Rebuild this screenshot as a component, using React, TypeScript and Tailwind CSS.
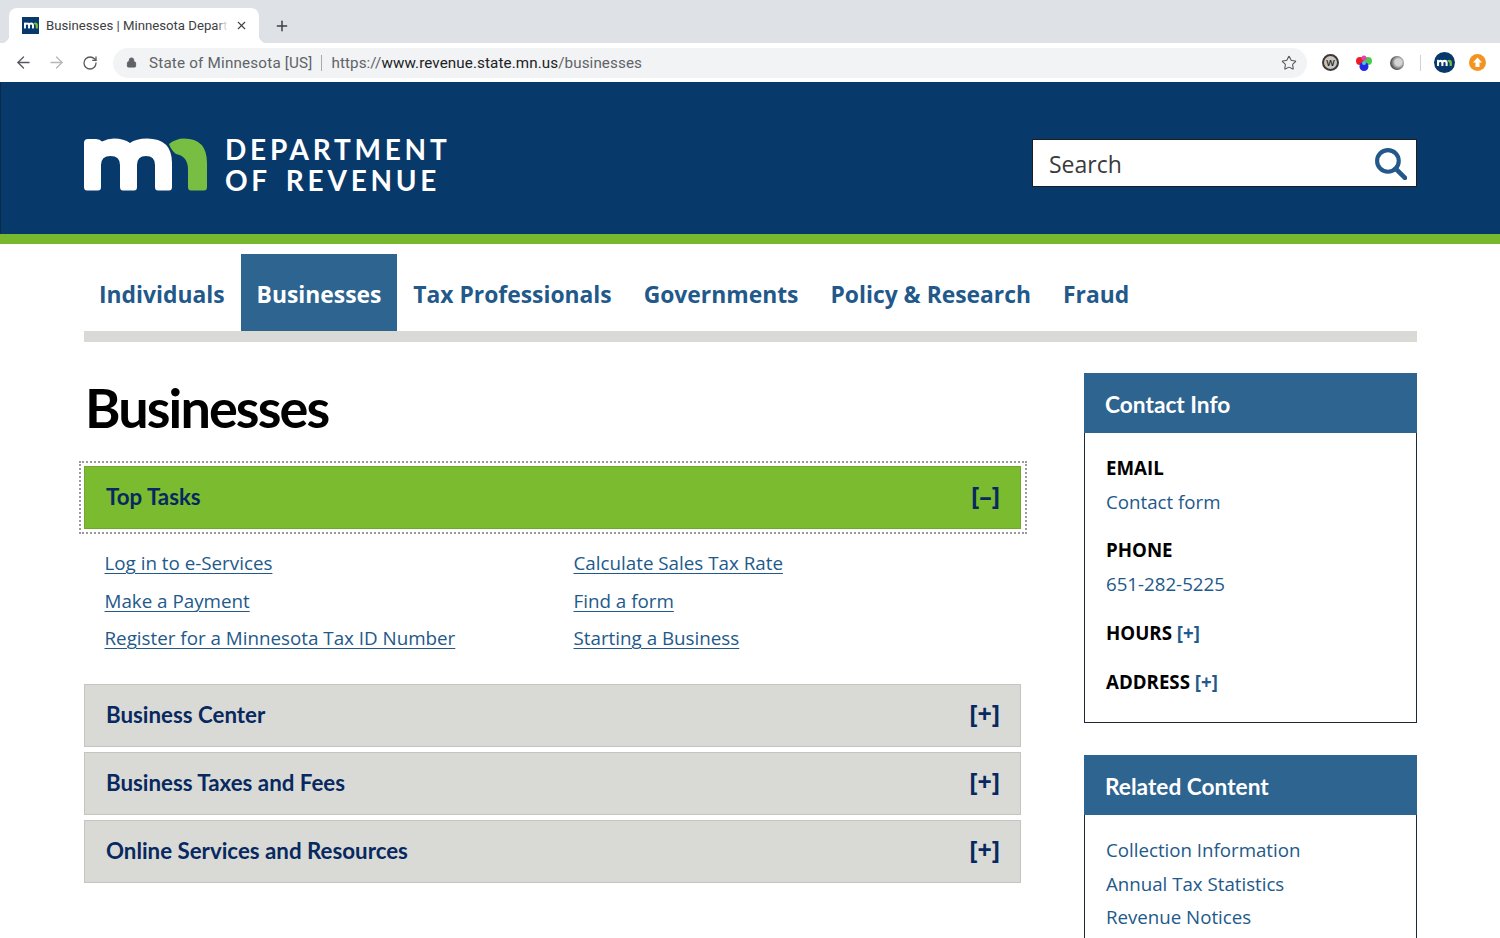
import React from "react";
import { ArrowLeft, ArrowRight, RotateCw, Lock, Star, X, Plus } from "lucide-react";

const WHITE_M = "M84 143Q84 139 88 139H96Q100 139 102 141.5Q108 138.5 114 138.5Q124 138.5 130 143Q136 138.5 147 138.5Q172 138.5 172 163V187Q172 190.5 169 190.5H158Q155 190.5 155 187V165Q155 156 146 156Q137 156 137 165V187Q137 190.5 134 190.5H123Q120 190.5 120 187V165Q120 156 110.5 156Q101 156 101 165V187Q101 190.5 98 190.5H87Q84 190.5 84 187Z";
const GREEN_N = "M169 144Q176 138.5 184 138.5Q207 138.5 207 163V187Q207 190.5 204 190.5H191Q188 190.5 188 187V170Q188 156 176 154Q171 150 169 144Z";

const Mark = ({ className }: { className: string }) => (
  <svg viewBox="84 138 124 54" className={className}>
    <path fill="#fff" d={WHITE_M} />
    <path fill="#78be43" d={GREEN_N} />
  </svg>
);

const Expand = ({ title, minus = false }: { title: string; minus?: boolean }) => (
  <div className={`flex items-center justify-between h-[63px] pl-[21px] pr-[20px] border ${minus ? "bg-[#7abb2f] border-[#6fa82b]" : "bg-[#d9dad6] border-[#c4c5bf]"}`}>
    <span className="font-['Lato',sans-serif] font-bold text-[22.3px] text-[#07295f] -mt-[2px]">{title}</span>
    <span className="font-['Open_Sans',sans-serif] font-bold text-[25px] text-[#07295f] -mt-[4px]">{minus ? "[–]" : "[+]"}</span>
  </div>
);

const TaskLink = ({ children }: { children: React.ReactNode }) => (
  <a className="text-[18.8px] leading-[26px] text-[#22598a] underline underline-offset-[3px] decoration-1">{children}</a>
);

const Side = ({ title, children }: { title: string; children: React.ReactNode }) => (
  <section className="border border-[#1a2a3a] border-t-0">
    <h2 className="h-[60px] -mx-px px-[21px] pt-[4px] flex items-center bg-[#2e6490] text-white font-['Lato',sans-serif] font-bold text-[22.7px]">{title}</h2>
    {children}
  </section>
);

export default function App() {
  return (
    <div className="w-[1500px] h-[938px] overflow-hidden bg-white font-['Open_Sans',sans-serif]">
      {/* browser tabs */}
      <div className="h-[43px] bg-[#dee1e6] flex items-end pl-[9px]">
        <div className="relative w-[250px] h-[35px] bg-white rounded-t-[8px] flex items-center pl-[13px] pr-[11px] gap-[7px]">
          <span className="absolute -left-[8px] bottom-0 w-[8px] h-[8px] bg-[radial-gradient(circle_at_0_0,#dee1e6_8px,white_8.5px)]" />
          <span className="absolute -right-[8px] bottom-0 w-[8px] h-[8px] bg-[radial-gradient(circle_at_100%_0,#dee1e6_8px,white_8.5px)]" />
          <span className="w-[17px] h-[17px] bg-[#07396a] shrink-0 flex items-center justify-center">
            <Mark className="w-[14px] h-[7px]" />
          </span>
          <span className="relative w-[183px] whitespace-nowrap overflow-hidden font-['Roboto',sans-serif] text-[13.2px] text-[#3c4043]">
            Businesses | Minnesota Depart
            <span className="absolute right-0 top-0 bottom-0 w-[12px] bg-gradient-to-l from-white to-transparent" />
          </span>
          <X size={13} strokeWidth={2} className="text-[#3c4043] shrink-0 ml-auto" />
        </div>
        <div className="h-[35px] flex items-center pl-[15px]">
          <Plus size={16} strokeWidth={2.2} className="text-[#3c4043]" />
        </div>
      </div>
      {/* browser toolbar */}
      <div className="h-[39px] bg-white flex items-center pl-[14px] pr-[11px]">
        <ArrowLeft size={19} strokeWidth={1.6} className="text-[#55585c]" />
        <ArrowRight size={19} strokeWidth={1.6} className="text-[#b4b6b9] ml-[14px]" />
        <RotateCw size={16} strokeWidth={1.9} className="text-[#55585c] ml-[16px]" />
        <div className="ml-[15px] w-[1194px] h-[30px] rounded-full bg-[#f1f3f4] flex items-center pl-[13px] pr-[10px] font-['Roboto',sans-serif] text-[15.2px]">
          <Lock size={11} fill="#5f6368" className="text-[#5f6368] mr-[12px]" />
          <span className="text-[#5f6368] pt-[1px] tracking-[0.2px]">State of Minnesota [US]</span>
          <span className="w-px h-[16px] bg-[#a8abae] mx-[9px]" />
          <span className="text-[#5f6368] pt-[1px] tracking-[0.1px]">https://</span>
          <span className="text-[#202124] pt-[1px] tracking-[0.1px]">www.revenue.state.mn.us</span>
          <span className="text-[#5f6368] pt-[1px] tracking-[0.1px]">/businesses</span>
          <Star size={16} strokeWidth={1.6} className="text-[#55585c] ml-auto" />
        </div>
        <div className="flex items-center ml-[15px]">
          <span className="w-[17px] h-[17px] rounded-full bg-[#c9c4bf] border-[2px] border-[#3b3836] flex items-center justify-center text-[9px] font-semibold text-[#222]">W</span>
          <svg viewBox="0 0 18 18" className="w-[18px] h-[18px] ml-[16px]">
            <circle cx="5" cy="7" r="4" fill="#ee1c25" />
            <circle cx="13" cy="7" r="4" fill="#4ecb4a" />
            <circle cx="9" cy="12.5" r="4.5" fill="#2626e6" />
            <circle cx="9" cy="9" r="2" fill="#45c8e0" />
            <circle cx="9" cy="4" r="2.5" fill="#e73fae" />
          </svg>
          <span className="w-[14px] h-[14px] rounded-full bg-[radial-gradient(circle_at_60%_45%,#d4d4d4_30%,#555555_65%)] ml-[17px]" />
          <span className="w-px h-[16px] bg-[#d0d2d4] ml-[16px]" />
          <span className="w-[21px] h-[21px] rounded-full bg-[#07396a] ml-[13px] flex items-center justify-center">
            <Mark className="w-[15px] h-[8px]" />
          </span>
          <svg viewBox="0 0 17 17" className="w-[17px] h-[17px] ml-[14px]">
            <circle cx="8.5" cy="8.5" r="8.5" fill="#f39422" />
            <path fill="#fff" d="M8.5 3.5 13 8.5H10.5V13H6.5V8.5H4Z" />
          </svg>
        </div>
      </div>
      {/* site header */}
      <header className="h-[152px] bg-[#07396a] border-l border-[#0a2a4a] flex items-center justify-between pl-[83px] pr-[83px]">
        <div className="flex items-center gap-[18px] mt-[14px]">
          <Mark className="w-[124px] h-[54px] shrink-0" />
          <div className="font-['Lato',sans-serif] font-bold text-white text-[28px] leading-[31px] tracking-[3.75px] [word-spacing:5px] whitespace-nowrap -ml-[1px] -mt-[1px]">
            <div>DEPARTMENT</div>
            <div>OF REVENUE</div>
          </div>
        </div>
        <div className="w-[385px] h-[48px] mt-[10px] bg-white border border-[#1d1d1d] flex items-center justify-between pl-[16px] pr-[9px]">
          <span className="text-[23px] text-[#3a3a3a] pt-[3px]">Search</span>
          <svg viewBox="0 0 32 32" className="w-[33px] h-[33px]" fill="none" stroke="#22598a">
            <circle cx="13.5" cy="13.5" r="10.5" strokeWidth="4" />
            <path d="M21 21l9 9" strokeWidth="4.5" strokeLinecap="round" />
          </svg>
        </div>
      </header>
      <div className="h-[10px] bg-[#78b82f]" />
      {/* nav */}
      <div className="ml-[84px] mr-[83px] mt-[10px]">
        <nav className="flex h-[77px] -ml-[1px] font-['Open_Sans',sans-serif] font-bold text-[22.85px] text-[#22598a]">
          {["Individuals", "Businesses", "Tax Professionals", "Governments", "Policy & Research", "Fraud"].map((n) => (
            <a key={n} className={`px-[16px] pt-[5px] flex items-center whitespace-nowrap ${n === "Businesses" ? "bg-[#2e6490] text-white" : ""}`}>{n}</a>
          ))}
        </nav>
        <div className="h-[11px] bg-[#d9dad6]" />
      </div>
      {/* main */}
      <main className="ml-[84px] mr-[83px] mt-[31px] flex justify-between items-start">
        <div className="w-[937px]">
          <h1 className="font-['Lato',sans-serif] font-bold text-[54px] tracking-[-1.9px] leading-[70px] text-black pl-[1px]">Businesses</h1>
          <div className="mt-[18px] border-2 border-dotted border-[#9a9a9a] pl-[3px] pr-[4px] py-[3px] -ml-[5px] -mr-[6px]">
            <Expand title="Top Tasks" minus />
          </div>
          <div className="pl-[20.5px] mt-[16px] grid grid-cols-[469px_1fr] gap-y-[11.5px]">
            <TaskLink>Log in to e-Services</TaskLink>
            <TaskLink>Calculate Sales Tax Rate</TaskLink>
            <TaskLink>Make a Payment</TaskLink>
            <TaskLink>Find a form</TaskLink>
            <TaskLink>Register for a Minnesota Tax ID Number</TaskLink>
            <TaskLink>Starting a Business</TaskLink>
          </div>
          <div className="mt-[33px] flex flex-col gap-[5px]">
            <Expand title="Business Center" />
            <Expand title="Business Taxes and Fees" />
            <Expand title="Online Services and Resources" />
          </div>
        </div>
        <aside className="w-[333px] flex flex-col gap-[32px]">
          <Side title="Contact Info">
            <div className="h-[289px] px-[21px] pt-[22px] text-[18.7px] leading-[26px]">
              <div className="font-bold text-black">EMAIL</div>
              <div className="mt-[8px] text-[#22598a]">Contact form</div>
              <div className="mt-[22px] font-bold text-black">PHONE</div>
              <div className="mt-[8px] text-[#22598a]">651-282-5225</div>
              <div className="mt-[23px] font-bold text-black">HOURS <span className="text-[#22598a]">[+]</span></div>
              <div className="mt-[23px] font-bold text-black">ADDRESS <span className="text-[#22598a]">[+]</span></div>
            </div>
          </Side>
          <Side title="Related Content">
            <div className="px-[21px] pt-[22px] pb-[10px] text-[18.7px] leading-[26px] text-[#22598a] flex flex-col gap-[7.5px]">
              <div>Collection Information</div>
              <div>Annual Tax Statistics</div>
              <div>Revenue Notices</div>
            </div>
          </Side>
        </aside>
      </main>
    </div>
  );
}
